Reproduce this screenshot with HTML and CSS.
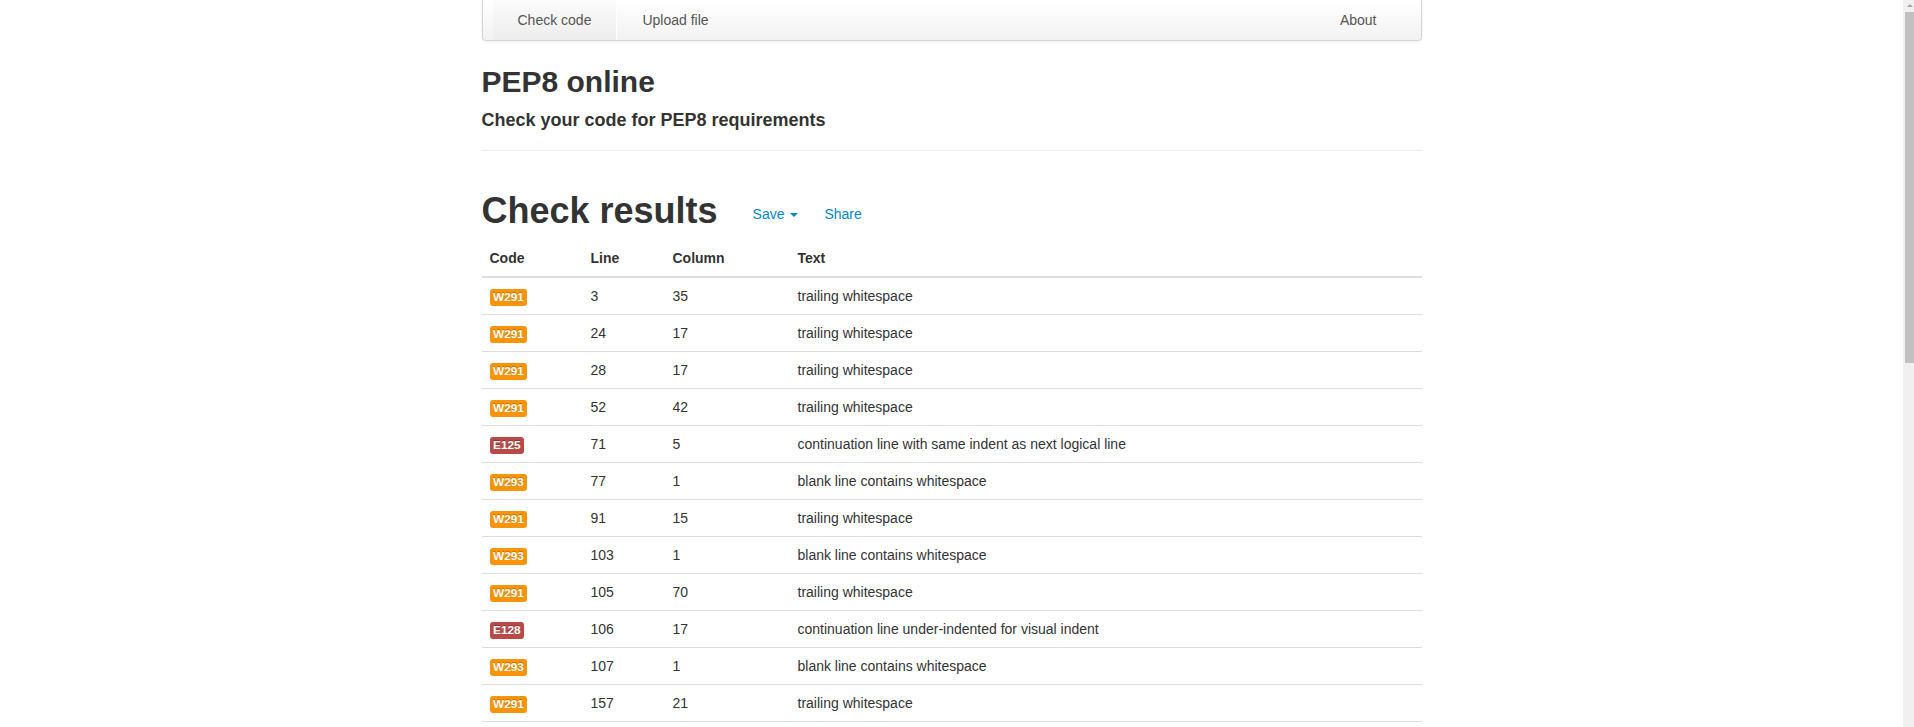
FILE: index.html
```html
<!DOCTYPE html>
<html lang="en">
<head>
<meta charset="utf-8">
<title>PEP8 online</title>
<link rel="stylesheet" href="styles.css">
</head>
<body>
<div class="container">
  <nav class="navbar">
    <ul class="nav">
      <li class="active"><a href="#">Check code</a></li>
      <li><a href="#">Upload file</a></li>
    </ul>
    <ul class="nav">
      <li><a href="#">About</a></li>
    </ul>
  </nav>

  <div class="page-header">
    <h2>PEP8 online</h2>
    <h4>Check your code for PEP8 requirements</h4>
  </div>

  <div class="results-head">
    <h1>Check results</h1>
    <ul class="actions">
      <li><a href="#">Save <span class="caret"></span></a></li>
      <li><a href="#">Share</a></li>
    </ul>
  </div>

  <table class="table">
    <colgroup>
      <col class="c-code">
      <col class="c-line">
      <col class="c-col">
      <col>
    </colgroup>
    <thead>
      <tr><th>Code</th><th>Line</th><th>Column</th><th>Text</th></tr>
    </thead>
    <tbody>
      <tr><td><span class="label label-warning">W291</span></td><td>3</td><td>35</td><td>trailing whitespace</td></tr>
      <tr><td><span class="label label-warning">W291</span></td><td>24</td><td>17</td><td>trailing whitespace</td></tr>
      <tr><td><span class="label label-warning">W291</span></td><td>28</td><td>17</td><td>trailing whitespace</td></tr>
      <tr><td><span class="label label-warning">W291</span></td><td>52</td><td>42</td><td>trailing whitespace</td></tr>
      <tr><td><span class="label label-danger">E125</span></td><td>71</td><td>5</td><td>continuation line with same indent as next logical line</td></tr>
      <tr><td><span class="label label-warning">W293</span></td><td>77</td><td>1</td><td>blank line contains whitespace</td></tr>
      <tr><td><span class="label label-warning">W291</span></td><td>91</td><td>15</td><td>trailing whitespace</td></tr>
      <tr><td><span class="label label-warning">W293</span></td><td>103</td><td>1</td><td>blank line contains whitespace</td></tr>
      <tr><td><span class="label label-warning">W291</span></td><td>105</td><td>70</td><td>trailing whitespace</td></tr>
      <tr><td><span class="label label-danger">E128</span></td><td>106</td><td>17</td><td>continuation line under-indented for visual indent</td></tr>
      <tr><td><span class="label label-warning">W293</span></td><td>107</td><td>1</td><td>blank line contains whitespace</td></tr>
      <tr><td><span class="label label-warning">W291</span></td><td>157</td><td>21</td><td>trailing whitespace</td></tr>
    </tbody>
  </table>
</div>

<div class="scrollbar" aria-hidden="true">
  <div class="scroll-btn"><span class="scroll-arrow"></span></div>
  <div class="scroll-thumb"></div>
</div>
</body>
</html>
```

FILE: styles.css
```css
html, body {
  margin: 0;
  padding: 0;
}

body {
  padding-right: 11px;
  font-family: "Liberation Sans", Arial, Helvetica, sans-serif;
  font-size: 14px;
  line-height: 1.42857;
  color: #333;
  background: #fff;
}

/* window scrollbar (drawn over the right edge) */
.scrollbar {
  position: fixed;
  top: 0;
  right: 0;
  bottom: 0;
  width: 11px;
  background: #f0f0f0;
  display: flex;
  flex-direction: column;
}

.scroll-btn {
  height: 12px;
  display: flex;
  justify-content: center;
  padding-left: 3px;
}

.scroll-arrow {
  margin-top: 4px;
  width: 0;
  height: 0;
  border-bottom: 3px solid #a3a3a3;
  border-left: 3px solid transparent;
  border-right: 3px solid transparent;
}

.scroll-thumb {
  height: 351px;
  margin-left: 2px;
  background: #c1c1c1;
}

.container {
  box-sizing: border-box;
  width: 970px;
  margin: 0 auto;
  padding: 0 15px;
}

/* navbar */
.navbar {
  display: flex;
  justify-content: space-between;
  height: 40px;
  padding: 0 19px 0 10px;
  border: 1px solid #d4d4d4;
  border-top: 0;
  border-radius: 0 0 4px 4px;
  background: linear-gradient(to bottom, #ffffff 0%, #f2f2f2 100%);
  box-shadow: 0 1px 4px rgba(0, 0, 0, 0.06);
}

.nav {
  display: flex;
  list-style: none;
  margin: 0;
  padding: 0;
}

.nav a {
  display: block;
  padding: 10px 25px;
  line-height: 20px;
  color: #555;
  text-decoration: none;
}

.nav .active a {
  border-right: 1px solid rgba(255, 255, 255, 0.95);
  background: linear-gradient(to bottom, rgba(0, 0, 0, 0.012), rgba(0, 0, 0, 0.02));
}

/* header */
.page-header {
  padding-bottom: 9px;
  border-bottom: 1px solid #eee;
}

.page-header h2 {
  margin: 24px 0 0;
  font-size: 30px;
  line-height: 1.1;
  font-weight: 700;
}

.page-header h4 {
  margin: 13px 0 10px;
  font-size: 18px;
  line-height: 1.1;
  font-weight: 700;
}

/* results heading */
.results-head {
  display: flex;
  align-items: flex-start;
  margin: 40px 0 10px;
}

.results-head h1 {
  margin: 0;
  font-size: 36px;
  line-height: 1.1;
  font-weight: 700;
}

.actions {
  display: flex;
  list-style: none;
  margin: 0 0 0 22px;
  padding: 13px 0 0;
}

.actions a {
  display: block;
  padding: 0 13px;
  line-height: 20px;
  color: #0088cc;
  text-decoration: none;
}

.caret {
  display: inline-block;
  width: 0;
  height: 0;
  margin-left: 2px;
  vertical-align: middle;
  border-top: 4px solid;
  border-left: 4px solid transparent;
  border-right: 4px solid transparent;
}

/* table */
.table {
  width: 100%;
  border-collapse: collapse;
  border-spacing: 0;
  table-layout: fixed;
  margin-bottom: 20px;
}

.c-code { width: 101px; }
.c-line { width: 82px; }
.c-col { width: 125px; }

.table th,
.table td {
  padding: 8px;
  line-height: 20px;
  text-align: left;
  vertical-align: top;
}

.table th {
  font-weight: 700;
  vertical-align: bottom;
  border-bottom: 2px solid #ddd;
}

.table td {
  border-top: 1px solid #ddd;
}

.table tbody tr:last-child td {
  border-bottom: 1px solid #ddd;
}

.label {
  display: inline;
  padding: 1px 3.5px 2px;
  font-size: 11.844px;
  font-weight: 700;
  line-height: 14px;
  color: #fff;
  white-space: nowrap;
  vertical-align: baseline;
  border-radius: 3px;
  text-shadow: 0 -1px 0 rgba(0, 0, 0, 0.25);
}

.label-warning {
  background-color: #f89406;
}

.label-danger {
  background-color: #b94a48;
}
```
